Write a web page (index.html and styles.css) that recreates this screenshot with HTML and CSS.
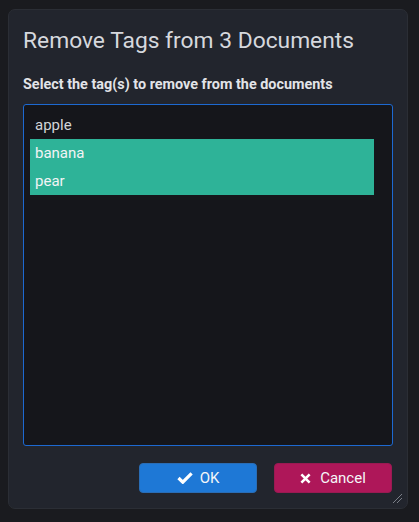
FILE: index.html
```html
<!DOCTYPE html>
<html>
<head>
<meta charset="utf-8">
<link rel="stylesheet" href="styles.css">
</head>
<body>
<div class="dialog">
  <h1 class="title">Remove Tags from 3 Documents</h1>
  <div class="label">Select the tag(s) to remove from the documents</div>
  <div class="listbox">
    <div class="item">apple</div>
    <div class="item selected">banana</div>
    <div class="item selected">pear</div>
  </div>
  <div class="actions">
    <button class="btn ok"><svg class="icon" viewBox="0 0 16 12" width="16" height="12"><path d="M1.5 6 L5.8 10.2 L14.6 1.4" fill="none" stroke="#fff" stroke-width="3.2" stroke-linejoin="miter"/></svg><span>OK</span></button>
    <button class="btn cancel"><svg class="icon" viewBox="0 0 12 12" width="11" height="11"><path d="M1.5 1.5 L10.5 10.5 M10.5 1.5 L1.5 10.5" fill="none" stroke="#fff" stroke-width="2.8"/></svg><span>Cancel</span></button>
  </div>
  <svg class="grip" viewBox="0 0 10 10" width="10" height="10"><path d="M1 10 L10 1 M5 10 L10 5" stroke="#7b7f88" stroke-width="1"/></svg>
</div>
</body>
</html>
```
FILE: styles.css
```css
html, body {
  margin: 0;
  padding: 0;
  background: #1a1b1f;
  font-family: Roboto, "Liberation Sans", sans-serif;
}
.dialog {
  position: relative;
  box-sizing: border-box;
  margin: 9px 0 0 8px;
  width: 400px;
  height: 500px;
  background: #22252d;
  border: 1px solid #2b2e35;
  border-radius: 7px;
  padding: 17px 14px 0 14px;
  display: flex;
  flex-direction: column;
}
.title {
  margin: 0;
  font-size: 22.8px;
  line-height: 28px;
  font-weight: 400;
  color: #d6d8dd;
}
.label {
  margin-top: 20px;
  font-size: 14.4px;
  line-height: 20px;
  font-weight: 700;
  color: #e2e4e8;
}
.listbox {
  margin-top: 9px;
  height: 342px;
  box-sizing: border-box;
  border: 1px solid #1d69d1;
  border-radius: 3px;
  background: #15161b;
  padding: 6px 18px 0 6px;
}
.item {
  height: 28px;
  line-height: 28px;
  padding-left: 5px;
  font-size: 15px;
  color: #d2d4d8;
}
.item.selected {
  background: #2eb398;
  color: #f2f4f5;
}
.actions {
  margin-top: 17px;
  padding-right: 1px;
  display: flex;
  justify-content: flex-end;
  gap: 17px;
}
.btn {
  width: 118px;
  height: 30px;
  box-sizing: border-box;
  border-radius: 4px;
  display: flex;
  align-items: center;
  justify-content: center;
  gap: 7px;
  font-family: Roboto, "Liberation Sans", sans-serif;
  font-size: 15px;
  color: #f4f6f8;
  padding: 0;
  margin: 0;
}
.btn.ok {
  background: #1e78d6;
  border: 1px solid #2a6db5;
}
.btn.cancel {
  background: #ae1759;
  border: 1px solid #9a1a52;
  gap: 9px;
}
.icon {
  display: block;
}
.grip {
  position: absolute;
  right: 5px;
  bottom: 5px;
}
```
